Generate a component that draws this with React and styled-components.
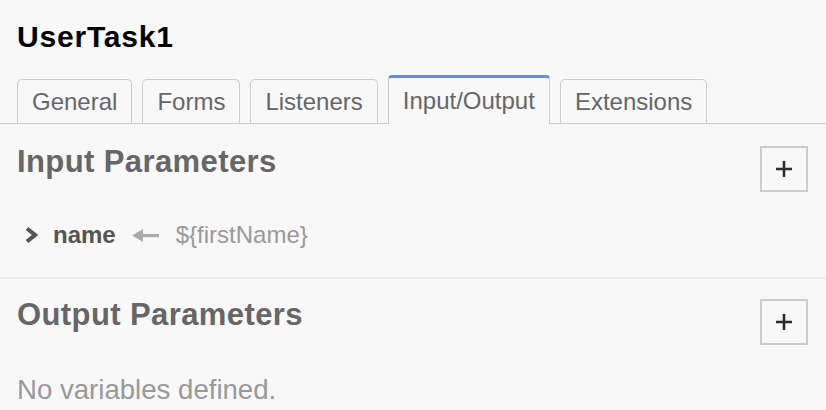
import React from 'react';
import styled, { createGlobalStyle } from 'styled-components';

const GlobalStyle = createGlobalStyle`
  html, body {
    margin: 0;
    padding: 0;
    background: #f8f8f8;
  }
  body {
    font-family: "Liberation Sans", Arial, sans-serif;
  }
`;

// Panel

const Panel = styled.div`
  width: 826px;
  height: 410px;
  overflow: hidden;
  background: #f8f8f8;
`;

const Header = styled.div`
  padding: 22px 17px 0;
`;

const Title = styled.h1`
  margin: 0;
  font-size: 30px;
  line-height: 30px;
  letter-spacing: 0.8px;
  font-weight: bold;
  color: #000;
`;

// Tabs

const TabBar = styled.div`
  display: flex;
  align-items: flex-end;
  gap: 10px;
  margin-top: 23px;
  padding-left: 17px;
  border-bottom: 1px solid #ccc;
`;

const Tab = styled.div`
  box-sizing: border-box;
  height: ${(p) => (p.$active ? '49px' : '44px')};
  padding: 0 14px;
  display: flex;
  align-items: center;
  font-size: 24px;
  color: #666;
  background: #f8f8f8;
  border: 1px solid #ccc;
  border-bottom: none;
  border-radius: ${(p) => (p.$active ? '4px 4px 0 0' : '5px 5px 0 0')};
  margin-bottom: ${(p) => (p.$active ? '-1px' : '0')};
  ${(p) => p.$active && 'border-top: 3px solid #5a8ef2;'}
`;

// Sections

const Section = styled.div`
  padding: ${(p) => (p.$top ? '22px' : '20px')} 18px ${(p) => (p.$last ? '0' : '30px')} 17px;
  border-bottom: ${(p) => (p.$last ? 'none' : '2px solid #ececec')};
`;

const SectionHead = styled.div`
  display: flex;
  justify-content: space-between;
  align-items: flex-start;
`;

const SectionTitle = styled.h2`
  margin: 0;
  font-size: 31px;
  line-height: 31px;
  letter-spacing: 0.4px;
  font-weight: bold;
  color: #666;
`;

const AddButton = styled.button`
  box-sizing: border-box;
  width: 48px;
  height: 46px;
  padding: 0;
  display: flex;
  align-items: center;
  justify-content: center;
  background: #f8f8f8;
  border: 2px solid #ccc;
  cursor: pointer;
`;

const ParamRow = styled.div`
  display: flex;
  align-items: center;
  margin-top: 31px;
  padding-left: 7px;
  height: 24px;
`;

const Chevron = styled.svg`
  width: 14px;
  height: 18px;
  margin-right: 15px;
`;

const ParamName = styled.span`
  font-size: 24px;
  line-height: 24px;
  font-weight: bold;
  color: #555;
`;

const Arrow = styled.svg`
  width: 27px;
  height: 13px;
  margin: 0 17px 0 16px;
`;

const ParamValue = styled.span`
  font-size: 24px;
  line-height: 24px;
  color: #999;
`;

const EmptyText = styled.p`
  margin: 31px 0 0;
  font-size: 27.6px;
  line-height: 28px;
  color: #999;
`;

const PlusIcon = () => (
  <svg width="18" height="18" viewBox="0 0 18 18">
    <path d="M9 1 V17 M1 9 H17" stroke="#2b2b2b" strokeWidth="2.6" />
  </svg>
);

const tabs = ['General', 'Forms', 'Listeners', 'Input/Output', 'Extensions'];

const App = () => {
  return (
    <Panel>
      <GlobalStyle />
      <Header>
        <Title>UserTask1</Title>
      </Header>
      <TabBar>
        {tabs.map((t) => (
          <Tab key={t} $active={t === 'Input/Output'}>
            {t}
          </Tab>
        ))}
      </TabBar>

      <Section $top>
        <SectionHead>
          <SectionTitle>Input Parameters</SectionTitle>
          <AddButton>
            <PlusIcon />
          </AddButton>
        </SectionHead>
        <ParamRow>
          <Chevron viewBox="0 0 14 18">
            <path d="M3 2.5 L11 9 L3 15.5" fill="none" stroke="#555" strokeWidth="4" />
          </Chevron>
          <ParamName>name</ParamName>
          <Arrow viewBox="0 0 27 13">
            <path d="M0 6.5 L11 0 L11 13 Z" fill="#aaa" />
            <rect x="9" y="5" width="18" height="3.2" fill="#aaa" />
          </Arrow>
          <ParamValue>{'${firstName}'}</ParamValue>
        </ParamRow>
      </Section>

      <Section $last>
        <SectionHead>
          <SectionTitle>Output Parameters</SectionTitle>
          <AddButton>
            <PlusIcon />
          </AddButton>
        </SectionHead>
        <EmptyText>No variables defined.</EmptyText>
      </Section>
    </Panel>
  );
};

export default App;
